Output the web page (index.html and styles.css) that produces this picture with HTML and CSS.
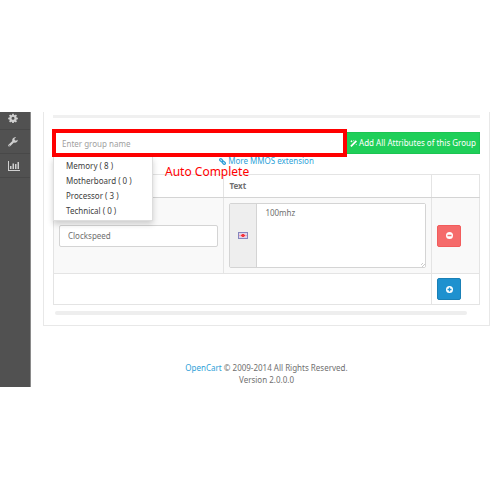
FILE: index.html
```html
<!DOCTYPE html>
<html lang="en">
<head>
<meta charset="utf-8">
<title>Attributes</title>
<link rel="stylesheet" href="styles.css">
</head>
<body>
<div class="app">
  <nav class="side" aria-label="Main">
    <a href="#" aria-label="System" class="first"><svg width="10" height="10" viewBox="0 0 16 16"><path fill-rule="evenodd" d="M6.8 1h2.4l.4 2 1.3.6 1.7-1.200 1.700 1.700-1.200 1.700.6 1.300 2 .4v2.400l-2 .4-.6 1.300 1.200 1.700-1.700 1.700-1.700-1.200-1.300.6-.4 2H6.800l-.4-2-1.300-.6-1.700 1.200-1.700-1.700 1.200-1.700-.6-1.300-2-.4V7.500l2-.4.6-1.300-1.200-1.700 1.700-1.700 1.700 1.200 1.300-.6zM8 6.100a2.400 2.400 0 1 0 0 4.800 2.400 2.400 0 0 0 0-4.800z"/></svg></a>
    <a href="#" aria-label="Tools"><svg width="10" height="10" viewBox="0 0 16 16"><path fill-rule="evenodd" d="M15.400 4.300 12.700 6 10.500 4.800V2.300L13 .8C10.500-.2 7.200 1.300 6.800 4.500c-.1.700 0 1.300.2 1.900L.8 12.500c-.8.800-.6 1.700 0 2.400.8.800 1.700.8 2.500 0l6.200-6.200c3.200 1.200 6.500-1.200 5.900-4.400zM2.200 13a.8.800 0 1 1 0 1.600.8.800 0 0 1 0-1.600z"/></svg></a>
    <a href="#" aria-label="Reports"><svg width="12" height="10" viewBox="0 0 12 10"><path d="M0 0h1v9h11v1H0zM2 5h1.500v3H2zM4.500 2.500H6V8H4.500zM7 3h1.500v5H7zM9.500 1H11v7H9.500z"/></svg></a>
  </nav>
  <div class="main">
    <main class="panel">
      <div class="bar"></div>
      <div class="search">
        <div class="group">
          <input type="text" placeholder="Enter group name" aria-label="Group name">
          <ul class="menu">
            <li><a href="#">Memory ( 8 )</a></li>
            <li><a href="#">Motherboard ( 0 )</a></li>
            <li><a href="#">Processor ( 3 )</a></li>
            <li><a href="#">Technical ( 0 )</a></li>
          </ul>
          <span class="note">Auto Complete</span>
        </div>
        <button type="button" class="add-all"><svg width="7" height="7" viewBox="0 0 14 14"><path d="M11.500.5 14 3 3 14 .5 11.500zM3 0l.8 1.700L5.500 2.500l-1.700.8L3 5l-.8-1.700L.5 2.500l1.700-.8zM7.500 0 8 1l1 .5L8 2l-.5 1L7 2l-1-.5L7 1zM12.500 7.500l.5 1 1 .5-1 .5-.5 1-.5-1-1-.5 1-.5z"/></svg> Add All Attributes of this Group</button>
      </div>
      <p class="more"><a href="#"><svg width="7" height="7" viewBox="0 0 16 16"><g fill="none" stroke="currentColor" stroke-width="2.800"><rect x="1" y="2.500" width="8" height="5" rx="2.500" transform="rotate(45 5 5)"/><rect x="7" y="8.500" width="8" height="5" rx="2.500" transform="rotate(45 11 11)"/><path d="m6 6 4 4"/></g></svg> More MMOS extension</a></p>
      <table>
        <colgroup><col class="c-name"><col><col class="c-act"></colgroup>
        <thead><tr><th></th><th>Text</th><th></th></tr></thead>
        <tbody>
          <tr class="odd">
            <td><input class="field" type="text" value="Clockspeed" aria-label="Attribute"></td>
            <td><div class="lang"><span class="flag"><svg width="10" height="7" viewBox="0 0 10 7"><path fill="#8585bd" d="M0 0h10v7H0z"/><path fill="#e0d3e8" d="M1 1h8v5H1z"/><path fill="#f7a3ac" d="M1 3h8v1H1zM3 2h4v3H3z"/><path fill="#f2343c" d="M3 3h4v1H3zM4 2h2v3H4z"/></svg></span><textarea aria-label="Text">100mhz</textarea></div></td>
            <td><button type="button" class="btn remove" aria-label="Remove"><svg width="7" height="7" viewBox="0 0 14 14"><circle cx="7" cy="7" r="7" fill="#fff"/><path d="M3 5.500h8v3H3z"/></svg></button></td>
          </tr>
          <tr class="last">
            <td colspan="2"></td>
            <td><button type="button" class="btn add" aria-label="Add"><svg width="7" height="7" viewBox="0 0 14 14"><circle cx="7" cy="7" r="7" fill="#fff"/><path d="M3 5.700h2.700V3h2.600v2.700H11v2.600H8.300V11H5.700V8.300H3z"/></svg></button></td>
          </tr>
        </tbody>
      </table>
      <div class="scroll"></div>
    </main>
    <footer><a href="#">OpenCart</a> © 2009-2014 All Rights Reserved.<br>Version 2.0.0.0</footer>
  </div>
</div>
</body>
</html>
```
FILE: styles.css
```css
* { box-sizing: border-box; }
body {
  margin: 0;
  padding: 112px 0;
  background: #fff;
  color: #707070;
  font: 8px/12px "Noto Sans", "Open Sans", sans-serif;
}
input, textarea, button { font: inherit; color: inherit; margin: 0; }
a { color: #2d9fd8; text-decoration: none; }
svg { flex: none; }
.app { display: flex; min-height: 275px; }
.side { flex: none; width: 31px; background: #515151; border-right: 1px solid #8a8a8a; }
.side a {
  display: flex;
  height: 24px;
  align-items: center;
  padding-left: 8px;
  border-bottom: 1px solid #484848;
}
.side .first { height: 18px; padding-bottom: 6px; }
.side svg { fill: #d0d0d0; }
.main { flex: 1; min-width: 0; padding: 0 10px 0 12px; }
.panel { border: 1px solid #e8e8e8; border-top: 0; padding: 3px 9px 10px; }
.bar { height: 3px; background: #f0f0f0; }
.search { display: flex; align-items: center; margin-top: 11px; }
.group { position: relative; flex: 1; height: 28px; margin-left: -1px; border: 4px solid #f00; }
.group input {
  display: block;
  width: 100%;
  height: 20px;
  padding: 0 6px;
  border: 0;
  outline: 0;
  background: #fff;
}
.group input::placeholder { color: #a0a0a0; opacity: 1; }
.menu {
  position: absolute;
  z-index: 1;
  top: 24px;
  left: -3px;
  width: 100px;
  margin: 0;
  padding: 1px 0 2px;
  list-style: none;
  background: #fff;
  border: 1px solid #ddd;
  border-top: 0;
  box-shadow: 0 3px 6px rgba(0, 0, 0, .18);
}
.menu a { display: block; padding: 0 12px; line-height: 15px; color: #404040; }
.note {
  position: absolute;
  z-index: 2;
  top: 31px;
  left: 109px;
  color: #f00;
  font-size: 12px;
  line-height: 16px;
  white-space: nowrap;
}
.add-all {
  flex: none;
  display: flex;
  align-items: center;
  justify-content: center;
  gap: 2px;
  width: 133px;
  height: 22px;
  padding: 0;
  border: 1px solid #1cc452;
  border-left: 0;
  background: #1fcf59;
  color: #fff;
}
.add-all svg { fill: #fff; }
.more { margin: 0; height: 17px; line-height: 8px; text-align: center; }
.more svg { vertical-align: middle; }
table { width: 100%; table-layout: fixed; border-collapse: collapse; }
.c-name { width: 40%; }
.c-act { width: 48px; }
th, td { border: 1px solid #e4e4e4; padding: 5px; text-align: left; }
th { height: 23px; font-weight: 700; border-bottom-color: #d4d4d4; }
.odd { background: #f9f9f9; }
.last td { padding: 4px 5px; }
.field {
  display: block;
  width: 100%;
  height: 22px;
  padding: 0 8px;
  border: 1px solid #d4d4d4;
  border-radius: 2px;
  background: #fff;
}
.lang { display: flex; border: 1px solid #d4d4d4; border-radius: 2px; background: #fff; }
.flag {
  flex: none;
  display: flex;
  width: 27px;
  align-items: center;
  justify-content: center;
  background: #eee;
  border-right: 1px solid #d4d4d4;
}
.lang textarea {
  flex: 1;
  min-width: 0;
  height: 63px;
  padding: 3px 8px;
  border: 0;
  outline: 0;
  background: #fff;
  line-height: 12px;
}
.lang textarea::-webkit-resizer {
  background: repeating-linear-gradient(135deg, #fff 0 1px, #ccc 1px 2px) no-repeat right bottom / 4px 4px;
}
.btn {
  display: flex;
  align-items: center;
  justify-content: center;
  width: 24px;
  height: 22px;
  padding: 0;
  border: 1px solid;
  border-radius: 2px;
}
.remove { background: #f56b6b; border-color: #f25c5c; fill: #f56b6b; }
.add { background: #1e91cf; border-color: #1a80b6; fill: #1e91cf; }
.scroll { height: 4px; margin: 6px 13px 0 2px; border-radius: 2px; background: #eee; }
footer { margin-top: 36px; text-align: center; }
```
